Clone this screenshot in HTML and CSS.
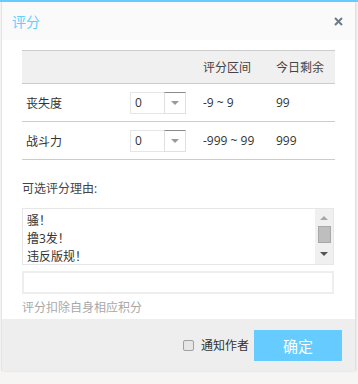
FILE: index.html
```html
<!DOCTYPE html>
<html>
<head>
<meta charset="utf-8">
<link rel="stylesheet" href="styles.css">
</head>
<body>
<div class="dialog">
  <div class="head">
    <span class="title">评分</span>
    <svg class="close" width="9" height="9" viewBox="0 0 9 9"><path d="M1 1L8 8M8 1L1 8" stroke="#6f7a88" stroke-width="2"/></svg>
  </div>
  <div class="body">
    <table class="rate">
      <colgroup><col class="c1"><col class="c2"><col class="c3"><col class="c4"></colgroup>
      <thead>
        <tr><th></th><th></th><th>评分区间</th><th>今日剩余</th></tr>
      </thead>
      <tbody>
        <tr>
          <td class="lbl">丧失度</td>
          <td><div class="sel"><span class="val">0</span><span class="dd"><i></i></span></div></td>
          <td>-9 ~ 9</td>
          <td>99</td>
        </tr>
        <tr>
          <td class="lbl">战斗力</td>
          <td><div class="sel"><span class="val">0</span><span class="dd"><i></i></span></div></td>
          <td>-999 ~ 99</td>
          <td>999</td>
        </tr>
      </tbody>
    </table>
    <div class="reason-label">可选评分理由:</div>
    <div class="listbox">
      <div class="items">
        <div>骚！</div>
        <div>撸3发！</div>
        <div>违反版规！</div>
      </div>
      <div class="sb">
        <span class="up"></span>
        <span class="thumb"></span>
        <span class="down"></span>
      </div>
    </div>
    <div class="reason-input"></div>
    <div class="hint">评分扣除自身相应积分</div>
  </div>
  <div class="foot">
    <label class="notify"><span class="cb"></span>通知作者</label>
    <button class="ok">确定</button>
  </div>
</div>
</body>
</html>
```
FILE: styles.css
```css
html, body {
  margin: 0;
  padding: 0;
}
body {
  background: #f7f5f3;
  font-family: "Open Sans", "Noto Sans CJK SC", sans-serif;
  font-size: 12px;
  color: #333;
  width: 358px;
  height: 384px;
  overflow: hidden;
  border-top: 2px solid #66ccff;
  box-sizing: border-box;
}
.dialog {
  margin-left: 2px;
  width: 353px;
  background: #fff;
  box-shadow: 1px 0 2px rgba(0,0,0,0.12), -1px 0 1px rgba(0,0,0,0.06);
}
.head {
  height: 38px;
  background: #fafafa;
  display: flex;
  align-items: center;
  justify-content: space-between;
  padding: 0 12px 0 10px;
}
.title {
  color: #66ccff;
  font-size: 14px;
}
.close {
  display: block;
}
.body {
  padding: 10px 20px 0 20px;
  height: 279px;
  box-sizing: border-box;
}
.rate {
  width: 313px;
  border-collapse: collapse;
  table-layout: fixed;
}
.c1 { width: 108px; }
.c2 { width: 73px; }
.c3 { width: 73px; }
.c4 { width: 59px; }
.rate th {
  background: #f0f0f0;
  font-weight: normal;
  text-align: left;
  height: 32px;
  padding: 0;
  border-top: 1px solid #cccccc;
  border-bottom: 1px solid #cccccc;
  color: #444;
}
.rate td {
  height: 37px;
  padding: 0;
  border-bottom: 1px solid #cccccc;
}
.rate td.lbl {
  padding-left: 4px;
}
.sel {
  display: flex;
  width: 56px;
  height: 22px;
}
.val {
  width: 34px;
  border: 1px solid #e6e6e6;
  border-right: none;
  box-sizing: border-box;
  padding-left: 4px;
  line-height: 20px;
  background: #fff;
}
.dd {
  width: 22px;
  border: 1px solid #e0e0e0;
  border-top: 1px solid #8a8a8a;
  box-sizing: border-box;
  display: flex;
  align-items: center;
  justify-content: center;
}
.dd i {
  width: 0;
  height: 0;
  border-left: 4px solid transparent;
  border-right: 4px solid transparent;
  border-top: 4px solid #9a9a9a;
}
.reason-label {
  margin-top: 20px;
  line-height: 17px;
  color: #444;
}
.listbox {
  margin-top: 11px;
  width: 312px;
  height: 57px;
  border: 1px solid #e6e6e6;
  box-sizing: border-box;
  display: flex;
}
.items {
  flex: 1;
  padding: 3px 0 0 4px;
  line-height: 18px;
  font-size: 12px;
}
.sb {
  width: 18px;
  background: #f0f0f0;
  display: flex;
  flex-direction: column;
  align-items: center;
  padding-top: 7px;
}
.up {
  width: 0;
  height: 0;
  border-left: 4px solid transparent;
  border-right: 4px solid transparent;
  border-bottom: 4px solid #a8a8a8;
}
.thumb {
  margin-top: 6px;
  width: 13px;
  height: 17px;
  background: #bebebe;
  border: 1px solid #a8a8a8;
  box-sizing: border-box;
}
.down {
  margin-top: 9px;
  width: 0;
  height: 0;
  border-left: 4px solid transparent;
  border-right: 4px solid transparent;
  border-top: 4px solid #555;
}
.reason-input {
  margin-top: 6px;
  width: 312px;
  height: 23px;
  border: 2px solid #eeeeee;
  box-sizing: border-box;
}
.hint {
  margin-top: 5px;
  color: #a8a8a8;
  line-height: 17px;
}
.foot {
  height: 52px;
  background: #eeeeee;
  display: flex;
  align-items: center;
  justify-content: flex-end;
  padding-right: 13px;
}
.notify {
  display: flex;
  align-items: center;
  color: #333;
  font-size: 12px;
  margin-right: 5px;
}
.cb {
  width: 11px;
  height: 11px;
  border: 1px solid #a0a0a0;
  border-radius: 2px;
  background: #e6e6e6;
  margin-right: 7px;
  box-sizing: border-box;
}
.ok {
  width: 88px;
  height: 31px;
  background: #66ccff;
  color: #fff;
  border: none;
  font-family: "Open Sans", "Noto Sans CJK SC", sans-serif;
  font-size: 15px;
  padding: 0;
}
```
